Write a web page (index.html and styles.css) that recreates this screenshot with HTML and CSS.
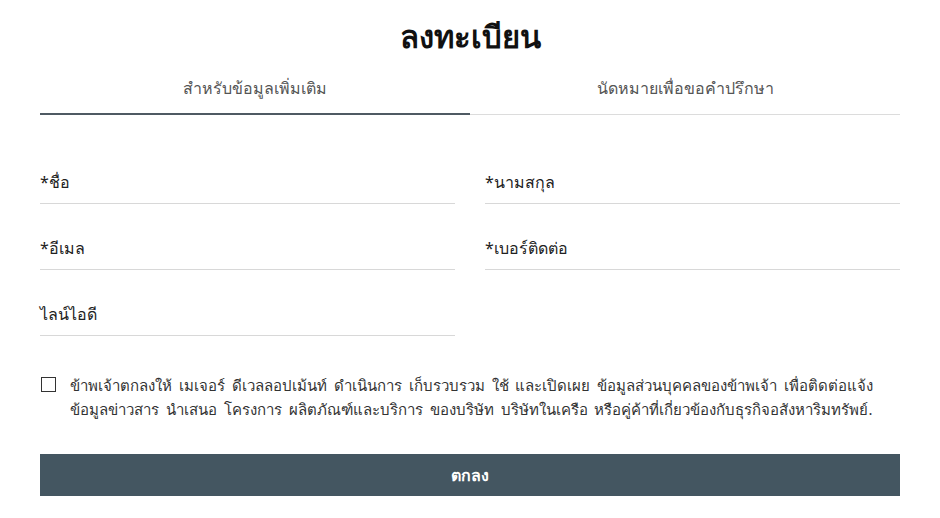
FILE: index.html
```html
<!DOCTYPE html>
<html lang="th">
<head>
    <meta charset="UTF-8">
    <meta name="viewport" content="width=device-width, initial-scale=1.0">
    <title>ลงทะเบียน</title>
    <link rel="stylesheet" href="styles.css">
</head>
<body>
    <div class="container">
        <h1>ลงทะเบียน</h1>
        <div class="tabs">
            <div class="tab active">สำหรับข้อมูลเพิ่มเติม</div>
            <div class="tab">นัดหมายเพื่อขอคำปรึกษา</div>
        </div>
        <form class="form">
            <div class="fields">
                <label class="field"><span>*ชื่อ</span></label>
                <label class="field"><span>*นามสกุล</span></label>
                <label class="field"><span>*อีเมล</span></label>
                <label class="field"><span>*เบอร์ติดต่อ</span></label>
                <label class="field"><span>ไลน์ไอดี</span></label>
            </div>
            <label class="consent">
                <span class="box"></span>
                <span class="consent-text">ข้าพเจ้าตกลงให้ เมเจอร์ ดีเวลลอปเม้นท์ ดำเนินการ เก็บรวบรวม ใช้ และเปิดเผย ข้อมูลส่วนบุคคลของข้าพเจ้า เพื่อติดต่อแจ้ง ข้อมูลข่าวสาร นำเสนอ โครงการ ผลิตภัณฑ์และบริการ ของบริษัท บริษัทในเครือ หรือคู่ค้าที่เกี่ยวข้องกับธุรกิจอสังหาริมทรัพย์.</span>
            </label>
            <button type="button" class="submit">ตกลง</button>
        </form>
    </div>
</body>
</html>
```

FILE: styles.css
```css
body {
    font-family: "Noto Sans", "DejaVu Sans", sans-serif;
    margin: 0;
    padding: 0;
    background-color: #fff;
    color: #222;
}
.container {
    width: 860px;
    margin: 0 auto;
    padding-top: 14px;
}
h1 {
    margin: 0 0 18px;
    text-align: center;
    font-size: 31px;
    line-height: 44px;
    font-weight: bold;
    color: #111;
}
.tabs {
    display: flex;
}
.tab {
    flex: 1;
    text-align: center;
    font-size: 16px;
    line-height: 24px;
    color: #555;
    padding-bottom: 14px;
    border-bottom: 1px solid #dcdcdc;
}
.tab.active {
    border-bottom: 2px solid #4f5a63;
    padding-bottom: 13px;
}
.form {
    padding-top: 55px;
}
.fields {
    display: grid;
    grid-template-columns: 415px 415px;
    column-gap: 30px;
    row-gap: 32px;
}
.field {
    display: block;
    font-size: 16px;
    line-height: 24px;
    padding-bottom: 9px;
    border-bottom: 1px solid #d8d8d8;
    color: #222;
}
.consent {
    display: flex;
    align-items: flex-start;
    margin-top: 37px;
    gap: 14px;
}
.box {
    flex: none;
    width: 13px;
    height: 13px;
    border: 1.5px solid #333;
    margin-top: 4px;
    margin-left: 1px;
}
.consent-text {
    font-size: 15px;
    line-height: 24px;
    word-spacing: 3px;
    color: #333;
}
.submit {
    display: block;
    width: 100%;
    height: 42px;
    margin-top: 33px;
    border: none;
    background-color: #445661;
    color: #fff;
    font-family: inherit;
    font-size: 16px;
    font-weight: 600;
    cursor: pointer;
}
```
